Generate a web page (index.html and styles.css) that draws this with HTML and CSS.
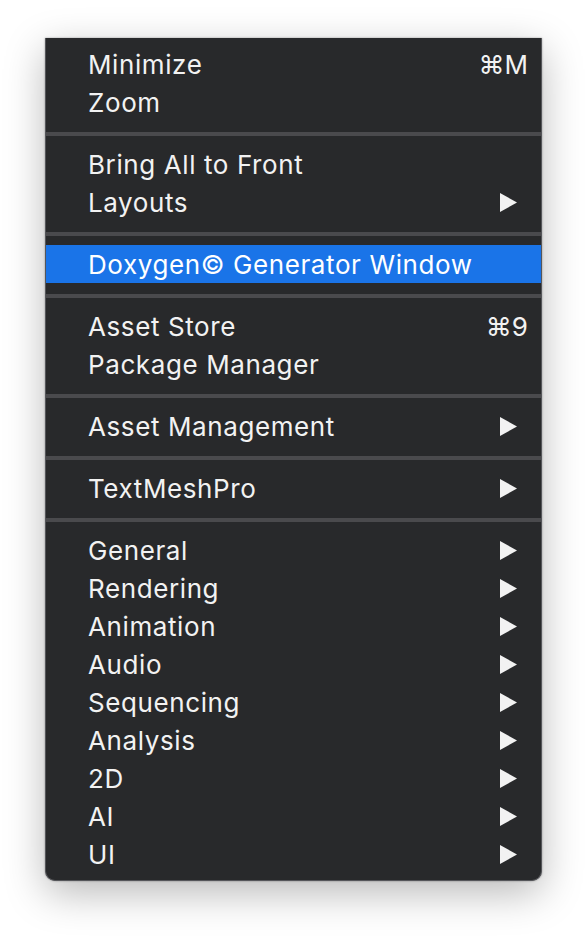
FILE: index.html
```html
<!DOCTYPE html>
<html>
<head>
<meta charset="utf-8">
<link rel="stylesheet" href="styles.css">
</head>
<body>
<div class="menu">
  <div class="item"><span class="label">Minimize</span><span class="key">⌘M</span></div>
  <div class="item"><span class="label">Zoom</span></div>
  <div class="sep"></div>
  <div class="item"><span class="label">Bring All to Front</span></div>
  <div class="item"><span class="label">Layouts</span><svg class="arrow" viewBox="0 0 17 19"><polygon points="0,0 17,9.5 0,19"/></svg></div>
  <div class="sep"></div>
  <div class="item active"><span class="label">Doxygen© Generator Window</span></div>
  <div class="sep"></div>
  <div class="item"><span class="label">Asset Store</span><span class="key">⌘9</span></div>
  <div class="item"><span class="label">Package Manager</span></div>
  <div class="sep"></div>
  <div class="item"><span class="label">Asset Management</span><svg class="arrow" viewBox="0 0 17 19"><polygon points="0,0 17,9.5 0,19"/></svg></div>
  <div class="sep"></div>
  <div class="item"><span class="label">TextMeshPro</span><svg class="arrow" viewBox="0 0 17 19"><polygon points="0,0 17,9.5 0,19"/></svg></div>
  <div class="sep"></div>
  <div class="item"><span class="label">General</span><svg class="arrow" viewBox="0 0 17 19"><polygon points="0,0 17,9.5 0,19"/></svg></div>
  <div class="item"><span class="label">Rendering</span><svg class="arrow" viewBox="0 0 17 19"><polygon points="0,0 17,9.5 0,19"/></svg></div>
  <div class="item"><span class="label">Animation</span><svg class="arrow" viewBox="0 0 17 19"><polygon points="0,0 17,9.5 0,19"/></svg></div>
  <div class="item"><span class="label">Audio</span><svg class="arrow" viewBox="0 0 17 19"><polygon points="0,0 17,9.5 0,19"/></svg></div>
  <div class="item"><span class="label">Sequencing</span><svg class="arrow" viewBox="0 0 17 19"><polygon points="0,0 17,9.5 0,19"/></svg></div>
  <div class="item"><span class="label">Analysis</span><svg class="arrow" viewBox="0 0 17 19"><polygon points="0,0 17,9.5 0,19"/></svg></div>
  <div class="item"><span class="label">2D</span><svg class="arrow" viewBox="0 0 17 19"><polygon points="0,0 17,9.5 0,19"/></svg></div>
  <div class="item"><span class="label">AI</span><svg class="arrow" viewBox="0 0 17 19"><polygon points="0,0 17,9.5 0,19"/></svg></div>
  <div class="item"><span class="label">UI</span><svg class="arrow" viewBox="0 0 17 19"><polygon points="0,0 17,9.5 0,19"/></svg></div>
</div>
</body>
</html>
```

FILE: styles.css
```css
html, body {
  margin: 0;
  padding: 0;
  background: #ffffff;
}

body {
  width: 588px;
  height: 936px;
  overflow: hidden;
  font-family: Inter, "DejaVu Sans", sans-serif;
}

.menu {
  margin: 38px 0 0 45px;
  width: 497px;
  box-sizing: border-box;
  background: #28292b;
  border: 1px solid #55565a;
  border-top: none;
  border-radius: 0 0 10px 10px;
  padding: 7px 0 7px;
  box-shadow: 0 12px 40px rgba(0, 0, 0, 0.28), 0 0 2px rgba(0, 0, 0, 0.4);
}

.item {
  height: 38px;
  display: flex;
  align-items: center;
  padding: 0 13px 0 42px;
  color: #f2f2f2;
  font-size: 26px;
  letter-spacing: 0.6px;
}

.item.active {
  background: #1a74e8;
  color: #ffffff;
}

.label {
  flex: 1;
  white-space: nowrap;
}

.key {
  font-size: 26px;
  letter-spacing: 0;
}

.arrow {
  width: 17px;
  height: 19px;
  fill: #f2f2f2;
  margin-right: 11px;
}

.sep {
  height: 4px;
  margin: 11px 0 9px;
  background: #4a4a4d;
}
```
